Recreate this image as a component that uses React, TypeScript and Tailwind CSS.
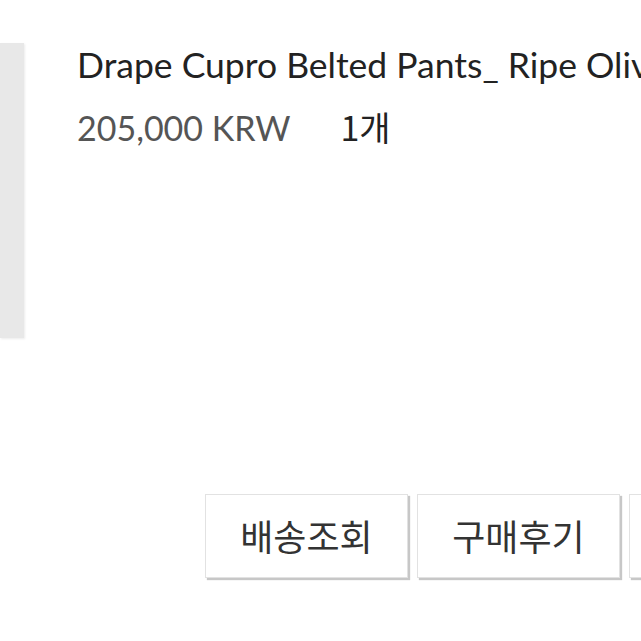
const LATO = "font-['Lato','Liberation_Sans','Noto_Sans_CJK_KR',sans-serif]";

const buttons = ["배송조회", "구매후기", "교환신청"];

export default function App() {
  return (
    <div className={`w-[641px] h-[641px] overflow-hidden bg-white ${LATO}`}>
      <div className="flex pt-[43px]">
        <div className="w-[24px] h-[295px] shrink-0 bg-[#e8e8e8] shadow-[1px_1px_2px_rgba(0,0,0,0.08)]" />
        <div className="ml-[53px] flex flex-col whitespace-nowrap">
          <p className="text-[35.5px] leading-[48px] text-[#222] mt-[-2px]">
            Drape Cupro Belted Pants_ Ripe Olive
          </p>
          <div className="flex items-baseline mt-[14px] text-[34px] leading-[48px]">
            <span className="text-[#555]">205,000 KRW</span>
            <span className="ml-[50px] text-[#222] font-['Noto_Sans_CJK_KR',sans-serif] text-[34px]">
              1개
            </span>
          </div>
        </div>
      </div>

      <div className="flex gap-[9px] pl-[205px] mt-[156px]">
        {buttons.map((label) => (
          <button
            key={label}
            type="button"
            className="w-[203px] h-[84px] shrink-0 bg-white border border-[#e2e2e2] shadow-[2px_2px_1px_rgba(0,0,0,0.22)] text-[36px] text-[#333] font-['Noto_Sans_CJK_KR',sans-serif] pb-[2px]"
          >
            {label}
          </button>
        ))}
      </div>
    </div>
  );
}
